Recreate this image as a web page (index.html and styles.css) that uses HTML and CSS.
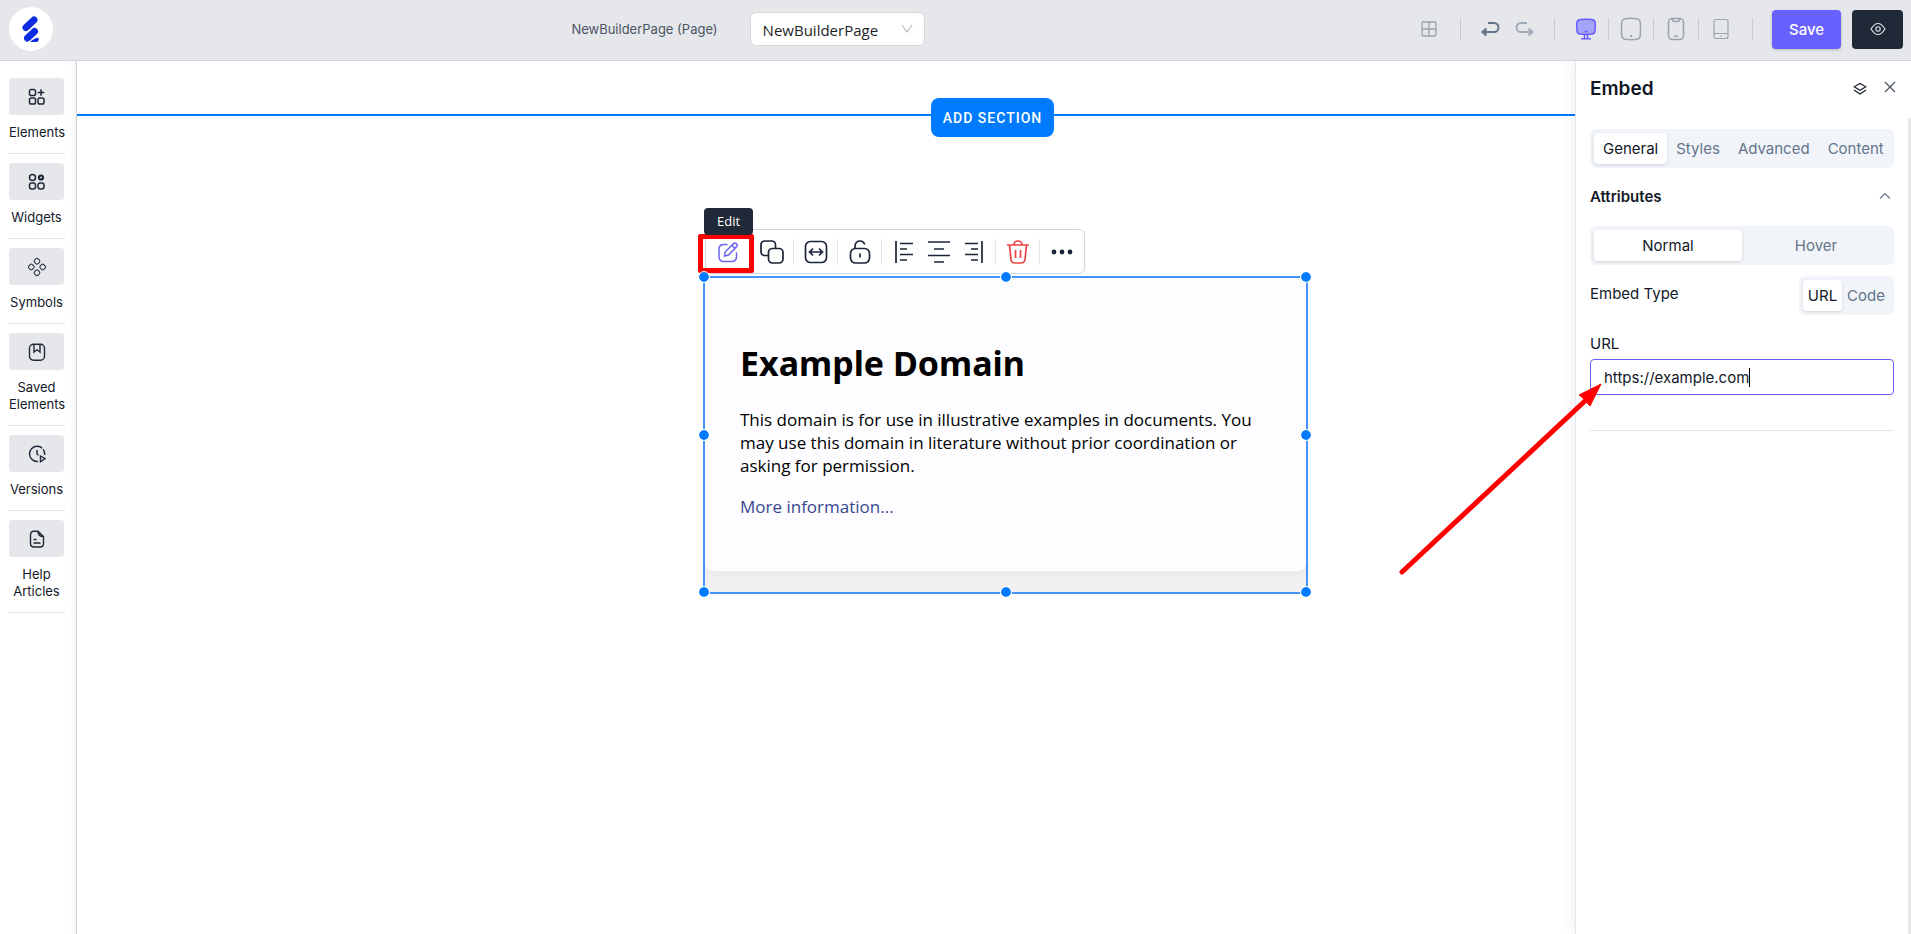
FILE: index.html
```html
<!DOCTYPE html>
<html lang="en">
<head>
<meta charset="utf-8">
<title>NewBuilderPage</title>
<link rel="stylesheet" href="styles.css">
</head>
<body>
<div class="app">
  <header class="topbar">
    <a class="logo" href="#" aria-label="Home">
      <svg width="18" height="28" viewBox="0 0 18 28" stroke="#0d2be0" stroke-width="7" stroke-linecap="round"><path d="M4 12.500 12 5M5.500 23 12.500 16.500"/><path d="M8 27q6.500-5 8.500-4 1 4-2.500 4z" fill="#0d2be0" stroke="none"/></svg>
    </a>
    <div class="page-pick">
      <label class="page-name" for="page">NewBuilderPage (Page)</label>
      <div class="select-wrap">
        <select id="page" class="page-select"><option>NewBuilderPage</option></select>
        <svg class="select-arrow" width="12" height="10" viewBox="0 0 12 10" fill="none" stroke="#b8bcc2" stroke-width="1.200"><path d="m1 1 5 7 5-7"/></svg>
      </div>
    </div>
    <div class="actions">
      <button class="tool" aria-label="Grid"><svg width="16" height="16" viewBox="0 0 16 16" fill="none" stroke="#9ca3af" stroke-width="1.300"><rect x="1" y="1" width="14" height="14" rx="1"/><path d="M8 1v14M1 8h14"/></svg></button>
      <i class="bar bar-grid"></i>
      <button class="tool" aria-label="Undo"><svg width="20" height="16" viewBox="0 0 20 16" fill="none" stroke="#64748b" stroke-width="2"><path d="M8 2h6a4.400 4.400 0 0 1 0 9H5"/><path d="M6 7v8L1.500 11z" fill="#64748b" stroke-width="1"/></svg></button>
      <button class="tool tool-redo" aria-label="Redo"><svg width="20" height="16" viewBox="0 0 20 16" fill="none" stroke="#a3acb9" stroke-width="2"><path d="M12 2H6a4.400 4.400 0 0 0 0 9h9"/><path d="M14 7v8l4.500-4z" fill="#a3acb9" stroke-width="1"/></svg></button>
      <i class="bar bar-history"></i>
      <div class="devices">
        <button class="device" aria-label="Desktop"><svg width="22" height="22" viewBox="0 0 22 22" fill="none" stroke="#6c5cff" stroke-width="1.500"><path d="M5 1.500Q11 .800 17 1.500 20 2 20.200 5 20.600 9 20 13 19.500 15.600 17 16 11 16.800 5 16 2.500 15.600 2 13 1.400 9 1.800 5 2 2 5 1.500Z" fill="#a5a4fb"/><path d="M9.500 13.500h3M9.500 16.500v3.500M12.500 16.500v3.500M6 20.800h10"/></svg></button>
        <button class="device" aria-label="Tablet landscape"><svg width="22" height="24" viewBox="0 0 22 24" fill="none" stroke="#9ca3af" stroke-width="1.500"><path d="M5 1.700Q11 .900 17 1.700 20 2 20.300 6 20.700 12 20.300 18 20 22 17 22.300 11 23.100 5 22.300 2 22 1.700 18 1.300 12 1.700 6 2 2 5 1.700Z"/><path d="M10 19h2" stroke-width="2"/></svg></button>
        <button class="device" aria-label="Phone"><svg width="18" height="24" viewBox="0 0 18 24" fill="none" stroke="#9ca3af" stroke-width="1.600"><rect x="1.500" y="1.500" width="15" height="21" rx="4"/><path d="M5.500 2q0 2.500 2 2.500h3q2 0 2-2.500M7 19.300h4"/></svg></button>
        <button class="device device-last" aria-label="Tablet"><svg width="16" height="22" viewBox="0 0 16 22" fill="none" stroke="#9ca3af" stroke-width="1.200"><rect x="1" y="1.500" width="14" height="19" rx="2"/><path d="M1 15.500h14M7.500 18.200h1.500" /></svg></button>
      </div>
      <button class="save">Save</button>
      <button class="preview" aria-label="Preview"><svg width="16" height="12" viewBox="0 0 16 12" fill="none" stroke="#e5e7eb" stroke-width="1.100"><path d="M1 6Q8-5 15 6 8 17 1 6Z"/><circle cx="8" cy="6" r="2.200"/></svg></button>
    </div>
  </header>

  <nav class="rail">
    <div class="rail-item"><button class="rail-btn" aria-labelledby="l1"><svg width="18" height="18" viewBox="0 0 18 18" fill="none" stroke="#1f2937" stroke-width="1.500"><rect x="1.500" y="1.500" width="6" height="6" rx="1.800"/><rect x="1.500" y="10" width="6" height="6" rx="1.800"/><rect x="10" y="10" width="6" height="6" rx="1.800"/><path d="M13 1.200v6.600M9.700 4.500h6.600"/></svg></button><span class="rail-label" id="l1">Elements</span></div>
    <div class="rail-item"><button class="rail-btn" aria-labelledby="l2"><svg width="18" height="18" viewBox="0 0 18 18" fill="none" stroke="#1f2937" stroke-width="1.500"><circle cx="4.500" cy="4.500" r="3"/><rect x="1.500" y="10" width="6" height="6" rx="2.200"/><rect x="10" y="10" width="6" height="6" rx="2.200"/><circle cx="13" cy="4.500" r="2" stroke-width="2.200"/></svg></button><span class="rail-label" id="l2">Widgets</span></div>
    <div class="rail-item"><button class="rail-btn" aria-labelledby="l3"><svg width="20" height="20" viewBox="0 0 20 20" fill="none" stroke="#1f2937" stroke-width="1"><g transform="translate(10 10)"><rect x="-2.500" y="-2.500" width="5" height="5" rx="1.600" transform="translate(0 -5.700) rotate(45)"/><rect x="-2.500" y="-2.500" width="5" height="5" rx="1.600" transform="translate(0 5.700) rotate(45)"/><rect x="-2.500" y="-2.500" width="5" height="5" rx="1.600" transform="translate(-5.700 0) rotate(45)"/><rect x="-2.500" y="-2.500" width="5" height="5" rx="1.600" transform="translate(5.700 0) rotate(45)"/></g></svg></button><span class="rail-label" id="l3">Symbols</span></div>
    <div class="rail-item"><button class="rail-btn" aria-labelledby="l4"><svg width="18" height="18" viewBox="0 0 18 18" fill="none" stroke="#1f2937" stroke-width="1.400"><rect x="1.500" y="1.200" width="15" height="16" rx="4"/><path d="M6 1.500V9l3-2.200L12 9V1.500"/></svg></button><span class="rail-label" id="l4">Saved Elements</span></div>
    <div class="rail-item"><button class="rail-btn" aria-labelledby="l5"><svg width="18" height="18" viewBox="0 0 18 18" fill="none" stroke="#1f2937" stroke-width="1.400"><path d="M10 16.400A7.600 7.600 0 1 1 16.600 10" stroke-dasharray="30 1.500 20"/><path d="M9 5v4l1.500 1.200M12.500 11l4.500 2.500-4.500 3.200z"/></svg></button><span class="rail-label" id="l5">Versions</span></div>
    <div class="rail-item"><button class="rail-btn" aria-labelledby="l6"><svg width="18" height="18" viewBox="0 0 18 18" fill="none" stroke="#1f2937" stroke-width="1.400"><path d="M10 1.200H6Q2.500 1.200 2.500 5v8.500q0 3.500 3.500 3.500h6q3.500 0 3.500-3.500V6.500zM10 1.200q0 5.300 5.500 5.300M5.500 9.500h3M5.500 13h7"/></svg></button><span class="rail-label" id="l6">Help Articles</span></div>
  </nav>

  <main class="canvas">
    <div class="add-row"><button class="add">ADD SECTION</button></div>
    <div class="widget">
      <div class="toolbar">
        <button class="tb tb-edit" aria-label="Edit"><svg width="22" height="22" viewBox="0 0 22 22" fill="none" stroke="#6c63ee" stroke-width="1.500" stroke-linecap="round"><path d="M10 3.500H7Q2 3.500 2 8v7.500Q2 20.500 7 20.500h7.500q5 0 5-5V12"/><path d="m7.500 15 .8-4.200L16.500 2.600q1.200-1.200 2.800 0 1.800 1.500.5 3L11.500 14zM15 4.500l3 3"/></svg></button>
        <button class="tb" aria-label="Duplicate"><svg width="24" height="24" viewBox="0 0 24 24" fill="none" stroke="#1b2537" stroke-width="1.700"><rect x="8.500" y="8.500" width="14.500" height="14.500" rx="4"/><path d="M8.500 15.500H5q-4 0-4-4V5q0-4 4-4h6.500q4 0 4 4v3.500"/></svg></button>
        <button class="tb" aria-label="Stretch width"><svg width="24" height="24" viewBox="0 0 24 24" fill="none" stroke="#1b2537" stroke-width="1.700"><rect x="1.500" y="1.500" width="21" height="21" rx="5"/><path d="M6 12h12M9 8.500 5.500 12 9 15.500M15 8.500l3.500 3.500-3.500 3.500"/></svg></button>
        <button class="tb" aria-label="Unlock"><svg width="22" height="26" viewBox="0 0 22 26" fill="none" stroke="#1b2537" stroke-width="1.700"><rect x="1.500" y="9.500" width="19" height="14.500" rx="5"/><path d="M6 9.500V7q.5-5 5-5 3.500 0 4.700 3.500M11 14.500v4"/></svg></button>
        <div class="aligns">
          <button class="al" aria-label="Align left"><svg width="20" height="22" viewBox="0 0 20 22" stroke="#1b2537" stroke-width="1.700"><path d="M2 0v22M6 2.500h13M6 8h7M6 13.500h13M6 19h7"/></svg></button>
          <button class="al" aria-label="Align center"><svg width="22" height="22" viewBox="0 0 22 22" stroke="#1b2537" stroke-width="1.700"><path d="M0 1h22M6 8h10M0 14.500h22M6 21h10"/></svg></button>
          <button class="al" aria-label="Align right"><svg width="20" height="22" viewBox="0 0 20 22" stroke="#1b2537" stroke-width="1.700"><path d="M18 0v22M1 2.500h13M7 8h7M1 13.500h13M7 19h7"/></svg></button>
        </div>
        <button class="tb" aria-label="Delete"><svg width="22" height="24" viewBox="0 0 22 24" fill="none" stroke="#ef4444" stroke-width="1.700"><path d="M0 5h22M7 5q0-4 4-4t4 4M2.500 5 4 19.500q.4 3.500 4 3.500h6q3.600 0 4-3.500L19.500 5M8.500 10v8M13.500 10v8"/></svg></button>
        <button class="tb tb-end" aria-label="More"><svg width="22" height="6" viewBox="0 0 22 6" fill="#1b2537"><circle cx="3" cy="3" r="2.400"/><circle cx="11" cy="3" r="2.400"/><circle cx="19" cy="3" r="2.400"/></svg></button>
        <span class="highlight"></span>
        <span class="tooltip" role="tooltip">Edit</span>
      </div>
      <div class="frame">
        <article class="embed">
          <h1 class="embed-title">Example Domain</h1>
          <p class="embed-text">This domain is for use in illustrative examples in documents. You may use this domain in literature without prior coordination or asking for permission.</p>
          <a class="embed-link" href="#">More information...</a>
        </article>
        <i class="dot nw"></i><i class="dot n"></i><i class="dot ne"></i><i class="dot w"></i><i class="dot e"></i><i class="dot sw"></i><i class="dot s"></i><i class="dot se"></i>
      </div>
    </div>
  </main>

  <aside class="panel">
    <div class="panel-head">
      <h2 class="panel-title">Embed</h2>
      <button class="icon-btn" aria-label="Layers"><svg width="14" height="14" viewBox="0 0 14 14" fill="none" stroke="#1b2537" stroke-width="1.300"><path d="m7 1.500 5.800 3.300L7 8.200 1.200 4.800zM1 8l6 4 6-4"/></svg></button>
      <button class="icon-btn close" aria-label="Close"><svg width="12" height="12" viewBox="0 0 12 12" stroke="#4b5563" stroke-width="1.300"><path d="m1 1 10 10M11 1 1 11"/></svg></button>
    </div>
    <div class="panel-body">
      <div class="seg tabs">
        <button class="seg-btn on">General</button><button class="seg-btn">Styles</button><button class="seg-btn">Advanced</button><button class="seg-btn">Content</button>
      </div>
      <button class="group-head">Attributes<svg width="12" height="8" viewBox="0 0 12 8" fill="none" stroke="#64748b" stroke-width="1.200"><path d="m1 6.500 5-5 5 5"/></svg></button>
      <div class="seg states">
        <button class="seg-btn on">Normal</button><button class="seg-btn">Hover</button>
      </div>
      <div class="type-row">
        <span class="field-label">Embed Type</span>
        <div class="seg types"><button class="seg-btn on">URL</button><button class="seg-btn">Code</button></div>
      </div>
      <label class="field-label" for="url">URL</label>
      <div class="field">
        <input id="url" class="url" type="text" value="https://example.com"><i class="caret"></i>
        <svg class="pointer" width="210" height="200" viewBox="0 0 210 200"><path d="M6 192 190 20" stroke="#f00" stroke-width="5" stroke-linecap="round"/><path d="m205 4-22 11 4 3 7 8z" fill="#f00" stroke="#f00"/></svg>
      </div>
      <hr class="rule">
    </div>
  </aside>
</div>
</body>
</html>
```
FILE: styles.css
```css
* { box-sizing: border-box; }
body { margin: 0; font-family: Inter, "Liberation Sans", sans-serif; font-size: 15px; color: #111827; background: #fff; }
button { font: inherit; color: inherit; border: 0; background: none; padding: 0; cursor: pointer; display: flex; align-items: center; justify-content: center; }
svg { display: block; flex: none; }

.app { display: grid; grid-template-columns: 77px 1fr 336px; grid-template-rows: 61px 1fr; min-height: 100vh; }

.topbar { grid-column: 1 / -1; display: flex; align-items: center; justify-content: space-between; padding: 0 8px 2px 9px; background: #e5e7eb; border-bottom: 1px solid #d1d5db; }
.logo { width: 44px; height: 44px; border-radius: 50%; background: #fff; display: flex; align-items: center; justify-content: center; }
.logo svg { fill: none; }
.page-pick { display: flex; align-items: center; padding-left: 22px; gap: 32px; }
.page-name { font-size: 13px; color: #4b5563; }
.select-wrap { position: relative; }
.page-select { appearance: none; width: 175px; height: 34px; padding: 2px 12px 0; border: 1px solid #d9d9d9; border-radius: 6px; background: #fff; font: 15px "Open Sans", sans-serif; color: #1f1f1f; }
.select-arrow { position: absolute; right: 12px; top: 12px; pointer-events: none; }
.actions { display: flex; align-items: center; }
.bar { width: 1px; height: 22px; background: #c7cbd1; }
.bar-grid { margin: 0 19px 0 23px; }
.tool-redo { margin-left: 15px; }
.bar-history { margin: 0 9px 0 19px; }
.devices { display: flex; align-items: center; }
.device { width: 45px; height: 22px; border-right: 1px solid #c7cbd1; }
.device-last { width: 54px; padding-right: 9px; }
.save { width: 69px; height: 39px; margin-left: 19px; border-radius: 4px; background: #6861ff; color: #fff; font-weight: 500; box-shadow: 0 1px 3px #0003; }
.preview { width: 51px; height: 39px; margin-left: 11px; border-radius: 4px; background: #1f2937; }

.rail { grid-column: 1; padding: 8px 3px 0 0; border-right: 1px solid #d1d5db; box-shadow: inset -6px 0 6px -6px #0000001a; display: flex; flex-direction: column; align-items: center; }
.rail-item { width: 57px; padding: 9px 1px 12px; border-bottom: 1px solid #e5e7eb; text-align: center; }
.rail-btn { width: 100%; height: 37px; border-radius: 3px; background: #e5e7eb; margin-bottom: 9px; }
.rail-label { display: block; font-size: 13px; line-height: 17px; }

.canvas { grid-column: 2 / 4; grid-row: 2; padding-right: 3px; display: flex; flex-direction: column; align-items: center; }
.add-row { width: 100%; display: flex; align-items: flex-start; margin-top: 37px; }
.add-row::before, .add-row::after { content: ""; flex: 1; height: 2px; margin-top: 16px; background: #007bff; }
.add { height: 39px; padding: 0 12px; border-radius: 8px; background: #007bff; color: #fff; font: 500 14px Roboto, sans-serif; letter-spacing: 1px; }

.widget { width: 605px; margin: 92px 0 0 26px; }
.toolbar { position: relative; display: flex; align-items: center; width: 380px; height: 45px; margin: 0 0 2px 2px; border: 1px solid #d1d5db; border-radius: 6px; background: #fff; }
.tb { width: 44px; height: 26px; border-right: 1px solid #e5e7eb; }
.tb-end { border-right: 0; }
.aligns { display: flex; align-items: center; justify-content: center; gap: 14px; flex: 1; height: 26px; border-right: 1px solid #e5e7eb; }
.highlight { position: absolute; left: -8px; top: 4px; width: 56px; height: 39px; border: 5px solid #f00; border-radius: 2px; }
.tooltip { position: absolute; left: -2px; top: -22px; width: 49px; height: 27px; border-radius: 4px; background: #1f2937; color: #fff; font: 13px/27px "Open Sans", sans-serif; text-align: center; }
.frame { position: relative; border: 2px solid #4595ff; background: #f0f0f2; padding-bottom: 21px; }
.embed { padding: 61px 48px 53px 35px; background: #fdfdff; border-radius: 0 0 8px 8px; box-shadow: 2px 3px 7px 2px #00000005; color: #000; font: 17px/23px "Open Sans", sans-serif; }
.embed-title { margin: 0 0 21px; font: 700 34px/48px "Noto Sans", sans-serif; }
.embed-text { margin: 0 0 18px; }
.embed-link { color: #38488f; text-decoration: none; }
.dot { position: absolute; width: 10px; height: 10px; margin: -5px; border-radius: 50%; background: #007bff; outline: 1px solid #fff; }
.nw { left: -1px; top: -1px; } .n { left: 50%; top: -1px; } .ne { left: 100%; top: -1px; }
.w { left: -1px; top: 50%; } .e { left: 100%; top: 50%; }
.sw { left: -1px; top: 100%; } .s { left: 50%; top: 100%; } .se { left: 100%; top: 100%; }

.panel { grid-column: 3; grid-row: 2; background: #fff; border-left: 1px solid #e2e8f0; box-shadow: -3px 0 12px #0000000f; clip-path: inset(0 0 0 -300px); display: flex; flex-direction: column; }
.panel-head { display: flex; align-items: center; gap: 17px; height: 57px; padding: 0 15px 2px 14px; }
.panel-title { flex: 1; margin: 0; font-size: 19px; font-weight: 600; }
.close { padding-bottom: 3px; }
.panel-body { flex: 1; padding: 11px 14px 0; border-right: 3px solid #e5e7eb; display: flex; flex-direction: column; }
.seg { display: flex; height: 39px; padding: 4px; border-radius: 6px; background: #f1f5f9; color: #64748b; }
.seg-btn { border-radius: 4px; font-size: 15px; padding: 0 9px; }
.on { background: #fff; color: #111827; box-shadow: 0 1px 3px #00000026; }
.tabs { justify-content: space-between; }
.states .seg-btn { flex: 1; }
.group-head { justify-content: space-between; height: 20px; margin: 18px 3px 20px 0; font-size: 15px; font-weight: 600; }
.type-row { display: flex; align-items: flex-start; justify-content: space-between; margin: 11px 0 19px; }
.field-label { font-size: 15px; line-height: 20px; }
.type-row .field-label { padding-top: 8px; }
.types .seg-btn { padding: 0 5px; }
.field { position: relative; display: flex; align-items: center; height: 36px; margin-top: 5px; padding-left: 13px; border: 1px solid #6861ff; border-radius: 4px; box-shadow: 0 1px 2px #0000000d; }
.url { field-sizing: content; border: 0; outline: 0; padding: 0; background: none; font: inherit; color: inherit; }
.caret { width: 1px; height: 19px; background: #000; }
.pointer { position: absolute; left: -195px; top: 20px; pointer-events: none; }
.rule { width: 100%; margin: 35px 0 0; border: 0; border-top: 1px solid #e2e8f0; }
```
